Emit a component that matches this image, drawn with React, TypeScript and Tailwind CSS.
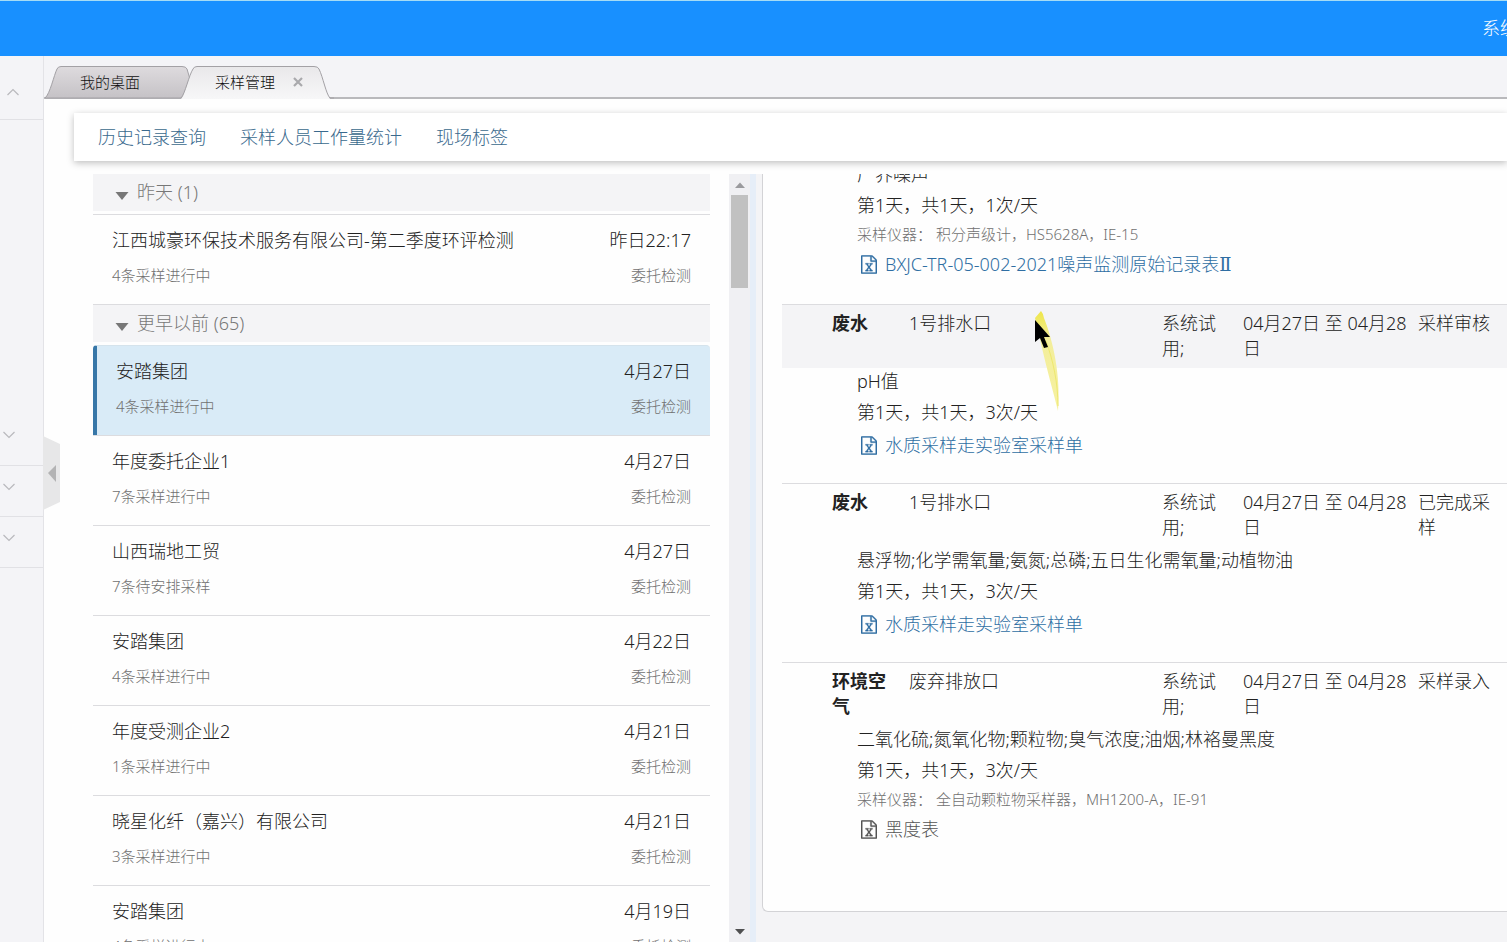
import React from "react";

type Task = { name: string; date: string; status: string; active?: boolean };
type Sample = {
  kind: string;
  point: string;
  state: string;
  items: string;
  times: string;
  device?: string;
  sheet: string;
  part?: string;
  muted?: boolean;
  hovered?: boolean;
};

const yesterday: Task[] = [
  { name: "江西城豪环保技术服务有限公司-第二季度环评检测", date: "昨日22:17", status: "4条采样进行中" },
];

const earlier: Task[] = [
  { name: "安踏集团", date: "4月27日", status: "4条采样进行中", active: true },
  { name: "年度委托企业1", date: "4月27日", status: "7条采样进行中" },
  { name: "山西瑞地工贸", date: "4月27日", status: "7条待安排采样" },
  { name: "安踏集团", date: "4月22日", status: "4条采样进行中" },
  { name: "年度受测企业2", date: "4月21日", status: "1条采样进行中" },
  { name: "晓星化纤（嘉兴）有限公司", date: "4月21日", status: "3条采样进行中" },
  { name: "安踏集团", date: "4月19日", status: "4条采样进行中" },
];

const noise: Sample = {
  kind: "噪声",
  point: "",
  state: "",
  items: "厂界噪声",
  times: "第1天，共1天，1次/天",
  device: "采样仪器： 积分声级计，HS5628A，IE-15",
  sheet: "BXJC-TR-05-002-2021噪声监测原始记录表",
  part: "Ⅱ",
};

const samples: Sample[] = [
  { kind: "废水", point: "1号排水口", state: "采样审核", items: "pH值", times: "第1天，共1天，3次/天", sheet: "水质采样走实验室采样单", hovered: true },
  { kind: "废水", point: "1号排水口", state: "已完成采样", items: "悬浮物;化学需氧量;氨氮;总磷;五日生化需氧量;动植物油", times: "第1天，共1天，3次/天", sheet: "水质采样走实验室采样单" },
  { kind: "环境空气", point: "废弃排放口", state: "采样录入", items: "二氧化硫;氮氧化物;颗粒物;臭气浓度;油烟;林袼曼黑度", times: "第1天，共1天，3次/天", device: "采样仪器： 全自动颗粒物采样器，MH1200-A，IE-91", sheet: "黑度表", muted: true },
];

function ExcelIcon() {
  return (
    <svg viewBox="0 0 1536 1792" className="h-[19px] w-4 shrink-0" fill="currentColor" stroke="currentColor" strokeWidth="24" aria-hidden="true">
      <path d="M1468 380q28 28 48 76t20 88v1152q0 40-28 68t-68 28h-1344q-40 0-68-28t-28-68v-1600q0-40 28-68t68-28h896q40 0 88 20t76 48zM1024 136v376h376q-10-29-22-41l-313-313q-12-12-41-22zM1408 1664v-1024h-416q-40 0-68-28t-28-68v-416h-768v1536h1280zM429 1429v107h281v-107h-75l103-161q5-7 10-16.5t7.5-13.5t3.5-4h2q1 4 5 10q2 4 4.5 7.5t6 8t6.500 8.500l107 161h-76v107h291v-107h-68l-192-273 195-282h67v-107h-279v107h74l-103 159q-4 7-10 16.5t-9 13.5l-2 3h-2q-1-4-5-10-6-11-17-23l-106-159h76v-107h-290v107h68l189 272-194 283h-68z" />
    </svg>
  );
}

function Chevron({ up = false }: { up?: boolean }) {
  return (
    <svg viewBox="0 0 14 8" className="h-2 w-3.5" fill="none" stroke="#b9b9bd" strokeWidth="1.2" aria-hidden="true">
      <path d={up ? "M1.500 7 7 1.500 12.500 7" : "M1.500 1 7 6.500 12.500 1"} />
    </svg>
  );
}

function Sidebar() {
  return (
    <aside className="flex w-11 shrink-0 flex-col border-r border-[#e3e3e7] bg-[#f4f4f7]">
      <button aria-label="收起菜单" className="flex h-16 items-center border-b border-[#e1e1e5] pt-2 pl-1.5"><Chevron up /></button>
      <div className="h-72" />
      <button aria-label="展开菜单一" className="flex h-[58px] items-center border-b border-[#e1e1e5] pb-1 pl-0.5"><Chevron /></button>
      <button aria-label="展开菜单二" className="flex h-[51px] items-center border-b border-[#e1e1e5] pb-2 pl-0.5"><Chevron /></button>
      <button aria-label="展开菜单三" className="flex h-[51px] items-center border-b border-[#e1e1e5] pb-2 pl-0.5"><Chevron /></button>
    </aside>
  );
}

function TabBar() {
  return (
    <nav className="relative flex h-[43px] shrink-0 border-b-2 border-[#b9b9bc] bg-[#f4f4f7] pt-2.5">
      <svg className="absolute top-2.5 left-0 h-[33px] w-[290px]" viewBox="0 0 290 33" aria-hidden="true">
        <defs>
          <linearGradient id="idle" x1="0" y1="0" x2="0" y2="1">
            <stop offset="0" stopColor="#dedbde" />
            <stop offset="1" stopColor="#c5c2c6" />
          </linearGradient>
          <linearGradient id="current" x1="0" y1="0" x2="0" y2="1">
            <stop offset="0" stopColor="#e9e8ea" />
            <stop offset="1" stopColor="#f7f7f8" />
          </linearGradient>
        </defs>
        <path d="M1 32C6 28 10 9 13 3Q14 .5 17 .5H138Q142 .5 143 3L148 20 138 32Z" fill="url(#idle)" stroke="#a3a1a5" />
        <path d="M137 33C141 29 145 9 149 3Q150 .5 153 .5H270Q274 .5 275 3C279 11 282 28 286 33Z" fill="url(#current)" />
        <path d="M137 32C141 28 145 9 149 3Q150 .5 153 .5H270Q274 .5 275 3C279 11 282 28 286 32H290" fill="none" stroke="#a3a1a5" />
      </svg>
      <button className="relative h-8 w-[135px] pl-9 text-left text-[15px] text-[#111]">我的桌面</button>
      <button className="relative h-8 pl-9 text-left text-[15px] text-[#111]">采样管理</button>
      <button aria-label="关闭" className="relative ml-[18px] flex h-8 items-center">
        <svg viewBox="0 0 10 10" className="h-2.5 w-2.5" stroke="#a9a9ac" strokeWidth="2.200" aria-hidden="true"><path d="M1 1 9 9M9 1 1 9" /></svg>
      </button>
    </nav>
  );
}

function GroupHead({ label }: { label: string }) {
  return (
    <button className="flex h-[37px] w-full shrink-0 items-center gap-2 bg-[#f4f4f6] pl-[22px] text-left text-[18px] text-[#777]">
      <svg viewBox="0 0 14 8" className="mt-1.5 h-2 w-3.5" fill="#777" aria-hidden="true"><path d="M.5 0H13.500L7 8Z" /></svg>
      {label}
    </button>
  );
}

function TaskRow({ task }: { task: Task }) {
  return (
    <li>
      <button
        className={
          task.active
            ? "flex h-[90px] w-full flex-col gap-[9px] rounded-t border-t border-l-4 border-t-[#d5e3ec] border-l-[#3777a8] bg-[#d9ebf7] px-[19px] pt-3 text-left"
            : "flex h-[90px] w-full flex-col gap-[9px] border-t border-[#dcdcdf] px-[19px] pt-3 text-left"
        }
      >
        <span className="flex h-[26px] w-full items-center justify-between whitespace-nowrap text-[18px] text-[#222]">
          <span>{task.name}</span>
          <span>{task.date}</span>
        </span>
        <span className="flex h-[26px] w-full items-center justify-between text-[15px] text-[#707070]">
          <span>{task.status}</span>
          <span>委托检测</span>
        </span>
      </button>
    </li>
  );
}

function TaskList() {
  return (
    <section className="w-[617px] shrink-0 overflow-hidden">
      <GroupHead label="昨天 (1)" />
      <ul className="pt-[3px]">{yesterday.map((t, i) => <TaskRow key={i} task={t} />)}</ul>
      <div className="border-t border-[#dcdcdf]"><GroupHead label="更早以前 (65)" /></div>
      <ul className="pt-[3px]">{earlier.map((t, i) => <TaskRow key={i} task={t} />)}</ul>
    </section>
  );
}

function SampleBody({ sample }: { sample: Sample }) {
  return (
    <div className="flex flex-col gap-1 pb-6 pl-[75px]">
      <p className="leading-[27px]">{sample.items}</p>
      <p className="leading-[27px]">{sample.times}</p>
      {sample.device && <p className="text-[15px] leading-[22px] whitespace-pre text-[#707070]">{sample.device}</p>}
      <a
        href="#sheet"
        className={
          sample.muted
            ? "mt-0.5 flex h-[27px] items-center gap-2 self-start pl-1 text-[#555]"
            : "mt-0.5 flex h-[27px] items-center gap-2 self-start pl-1 text-[#2f6ea3]"
        }
      >
        <ExcelIcon />
        <span>
          {sample.sheet}
          {sample.part && <span className="font-['DejaVu_Serif',serif]">{sample.part}</span>}
        </span>
      </a>
    </div>
  );
}

function SamplePanel() {
  return (
    <section className="flex min-w-0 flex-1 flex-col overflow-hidden bg-[#f4f4f6]">
      <div className="rounded-bl-md border-b border-l border-[#d3d3d6] bg-[#fefefe] pl-[19px] pb-11 text-[18px] text-[#222]">
        <div className="-mt-[13px] pb-0.5">
          <SampleBody sample={noise} />
        </div>
        {samples.map((s, i) => (
          <article key={i} className="border-t border-[#dcdcdf]">
            <header
              className={
                s.hovered
                  ? "grid h-[63px] grid-cols-[77px_253px_81px_175px_1fr] bg-[#f4f4f6] pt-1.5 pl-[50px] leading-[25px]"
                  : "grid h-[63px] grid-cols-[77px_253px_81px_175px_1fr] pt-1.5 pl-[50px] leading-[25px]"
              }
            >
              <h3 className="pr-5 font-bold">{s.kind}</h3>
              <span>{s.point}</span>
              <span className="pr-6">系统试用;</span>
              <span className="pr-2">04月27日 至 04月28日</span>
              <span className="pr-3">{s.state}</span>
            </header>
            <SampleBody sample={s} />
          </article>
        ))}
      </div>
    </section>
  );
}

function ScrollBar() {
  return (
    <div className="ml-[19px] flex w-[21px] shrink-0 flex-col bg-[#f0f0f3] pt-2 pb-[7px] pl-0.5">
      <svg viewBox="0 0 10 6" className="ml-1 h-1.5 w-2.5" fill="#9b9b9e" aria-hidden="true"><path d="M0 6H10L5 .5Z" /></svg>
      <div className="mt-[7px] h-[93px] w-[17px] bg-[#c1c1c1]" />
      <svg viewBox="0 0 10 6" className="mt-auto ml-1 h-1.5 w-2.5" fill="#505050" aria-hidden="true"><path d="M0 0H10L5 5.500Z" /></svg>
    </div>
  );
}

export default function App() {
  return (
    <div className="relative flex h-screen flex-col overflow-hidden bg-[#fefefe] font-['Noto_Sans','Noto_Sans_CJK_SC',sans-serif] font-light">
      <header className="flex h-14 shrink-0 items-center border-t border-[#a5dcf5] bg-[#1890ff]">
        <span className="ml-auto w-[25px] overflow-hidden text-[18px] whitespace-nowrap text-white">系统</span>
      </header>
      <div className="flex min-h-0 flex-1">
        <Sidebar />
        <main className="flex min-w-0 flex-1 flex-col">
          <TabBar />
          <div className="mt-3.5 ml-[30px] flex h-12 shrink-0 items-center gap-[34px] bg-white pl-6 text-[18px] text-[#3a698d] shadow-[0_2px_7px_rgba(0,0,0,0.25)]">
            <a href="#history">历史记录查询</a>
            <a href="#workload">采样人员工作量统计</a>
            <a href="#labels">现场标签</a>
          </div>
          <div className="mt-[13px] ml-[49px] flex min-h-0 flex-1">
            <TaskList />
            <ScrollBar />
            <div className="w-1.5 shrink-0 bg-[#e6eef8]" />
            <div className="w-1.5 shrink-0 bg-[#f4f4f6]" />
            <SamplePanel />
          </div>
        </main>
      </div>
      <button aria-label="收起侧栏" className="absolute top-[436px] left-[43px]">
        <svg viewBox="0 0 17 74" className="h-[74px] w-[17px]" aria-hidden="true">
          <path d="M0 0 17 8V66L0 74Z" fill="#e7e7e8" />
          <path d="M13 29V46L5 37Z" fill="#b3b3b4" />
        </svg>
      </button>
      <svg viewBox="0 0 30 102" className="pointer-events-none absolute top-[310px] left-[1032px] h-[102px] w-[30px]" aria-hidden="true">
        <defs>
          <linearGradient id="trail" x1="0" y1="0" x2="0" y2="1">
            <stop offset="0" stopColor="#eee64a" />
            <stop offset=".3" stopColor="#f3ee9b" />
            <stop offset="1" stopColor="#f6f1a0" />
          </linearGradient>
        </defs>
        <path d="M3 8 9 1Q11 3 12 8C21 31 29 65 26 101 21 81 15 60 10 38Z" fill="url(#trail)" />
        <path d="M14 31C21 50 26 73 26 96" fill="none" stroke="#eee86e" />
        <path d="M3 10V32L8 28 12 38 16 37 12 27H18Z" fill="#000" />
      </svg>
    </div>
  );
}
